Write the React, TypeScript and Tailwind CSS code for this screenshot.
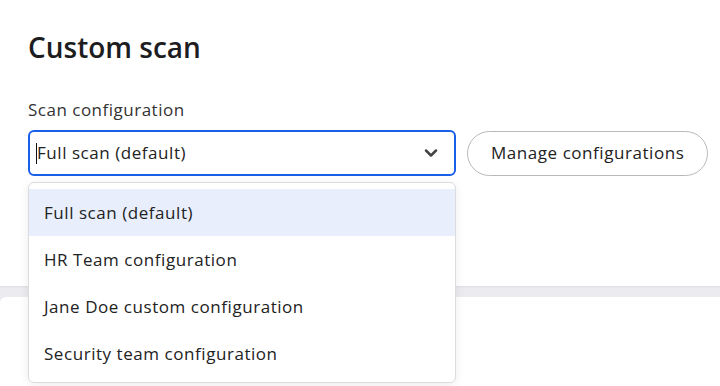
import { ChevronDown } from 'lucide-react';

const options = [
  'Full scan (default)',
  'HR Team configuration',
  'Jane Doe custom configuration',
  'Security team configuration',
];

export default function App() {
  return (
    <div
      className="relative h-[386px] w-[720px] overflow-hidden bg-[#ecebef] text-[#1d1d1f]"
      style={{ fontFamily: '"Open Sans", Lato, sans-serif' }}
    >
      <div className="h-[286px] bg-white px-7 pt-[29px] shadow-[0_1px_2px_rgba(0,0,0,0.06)]">
        <h1 className="text-[28px] font-semibold leading-[36px]">Custom scan</h1>

        <label className="mt-[35px] block text-[17px] leading-[20px] tracking-[0.5px] text-[#333]">
          Scan configuration
        </label>

        <div className="mt-[10px] flex items-center gap-[11px] tracking-[0.55px]">
          <div className="relative w-[428px] shrink-0">
            <div className="flex h-[46px] items-center rounded-[6px] border-2 border-[#1a5fe8] pl-[6px] pr-[13px]">
              <span className="h-[21px] w-px bg-[#111]" />
              <span className="flex-1 text-[17px] text-[#222]">Full scan (default)</span>
              <ChevronDown className="h-5 w-5 text-[#444]" strokeWidth={3} />
            </div>

            <ul className="absolute left-0 top-[52px] z-10 w-[428px] rounded-[6px] border border-[#dcdcdf] bg-white pb-[5px] pt-[6px] shadow-[0_2px_10px_rgba(0,0,0,0.08)]">
              {options.map((o, i) => (
                <li
                  key={o}
                  className={`flex h-[47px] items-center px-[15px] text-[17px] text-[#222] ${
                    i === 0 ? 'bg-[#e8eefc]' : ''
                  }`}
                >
                  {o}
                </li>
              ))}
            </ul>
          </div>

          <button className="h-[45px] shrink-0 whitespace-nowrap rounded-full border border-[#b9b9bc] bg-white px-[23px] text-[17px] text-[#222]">
            Manage configurations
          </button>
        </div>
      </div>

      <div className="mt-[11px] h-[90px] rounded-tl-[6px] bg-white" />
    </div>
  );
}
